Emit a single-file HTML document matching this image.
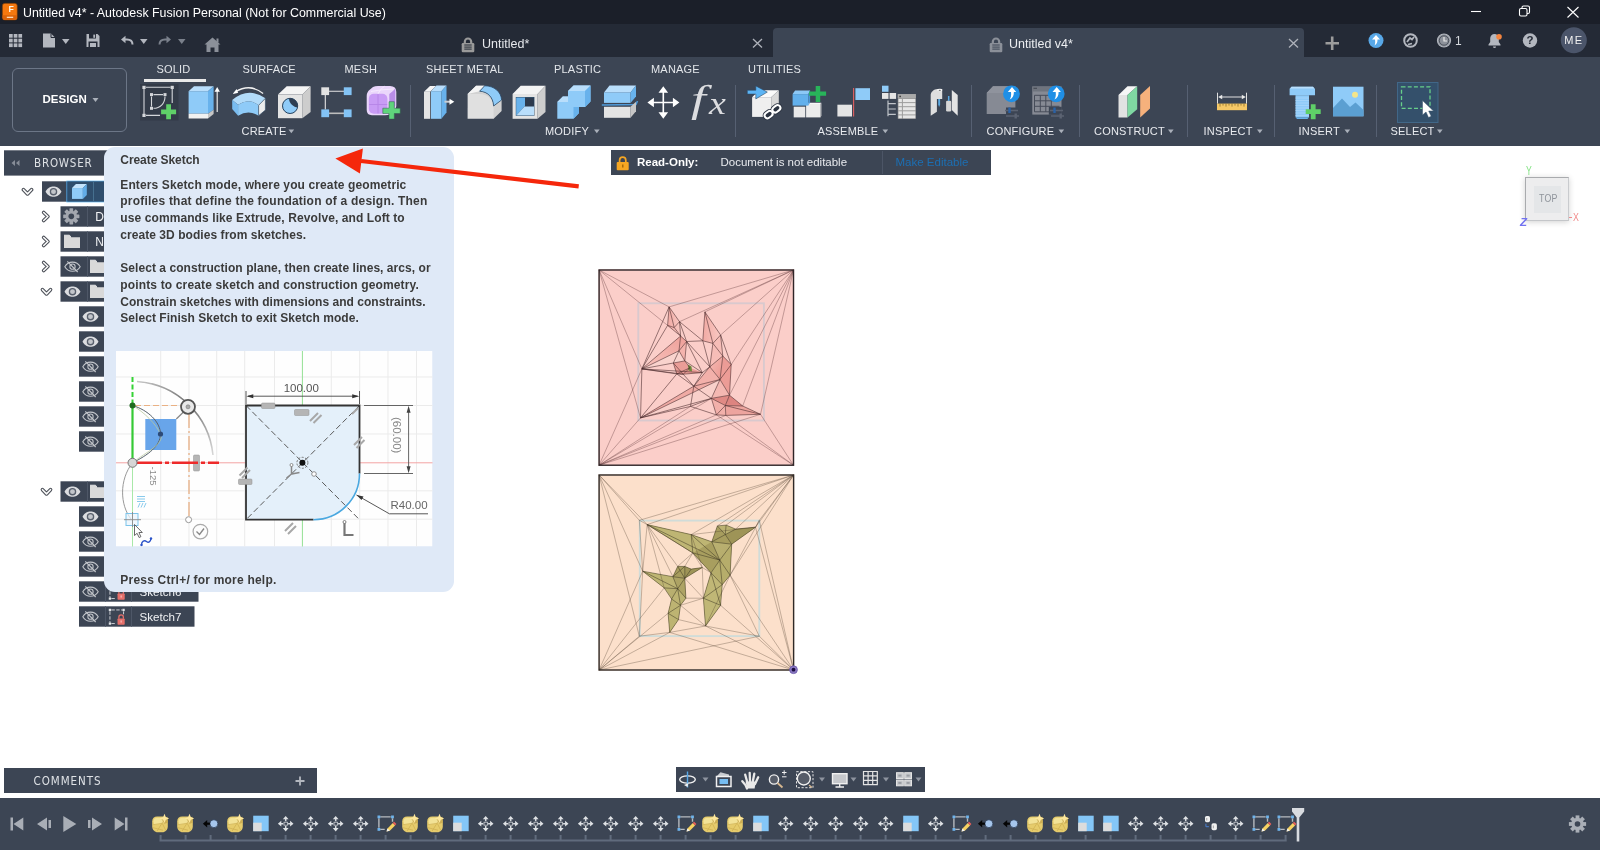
<!DOCTYPE html>
<html><head><meta charset="utf-8"><title>Untitled v4* - Autodesk Fusion Personal</title>
<style>
*{box-sizing:border-box;margin:0;padding:0}
html,body{width:1600px;height:850px;overflow:hidden;background:#fff;font-family:"Liberation Sans",sans-serif;}
.abs{position:absolute}
#titlebar{position:absolute;left:0;top:0;width:1600px;height:24px;background:#1b1f29;color:#fff}
#tabbar{position:absolute;left:0;top:24px;width:1600px;height:33px;background:#242a36}
#ribbon{position:absolute;left:0;top:57px;width:1600px;height:88.700px;background:#3c4554}
#timeline{position:absolute;left:0;top:798px;width:1600px;height:52px;background:#3c4554}
.t{position:absolute;white-space:nowrap;line-height:1}
.rl{position:absolute;white-space:nowrap;line-height:1;color:#e8eaee;font-size:11px;letter-spacing:0.2px;top:126.200px}
.tab{position:absolute;white-space:nowrap;line-height:1;color:#e3e6ea;font-size:11px;letter-spacing:0.2px;top:63.900px}
.sep{position:absolute;top:85px;width:1px;height:52px;background:#566072}
.tt{font-size:12px;font-weight:bold;color:#3b3b3b}
svg{position:absolute;overflow:visible}
#root{position:absolute;left:0;top:0;width:1600px;height:850px;will-change:transform}
</style></head><body>
<div id="root">
<!-- ===== TITLE BAR ===== -->
<div id="titlebar">
  <svg style="left:2.100px;top:2.800px" width="15.600" height="17.400" viewBox="0 0 15.600 17.400">
    <rect x="0.300" y="0.300" width="15" height="16.800" rx="2.600" fill="#f5780f" stroke="#6a3205" stroke-width="0.600"/>
    <path d="M0.600 12.200h14.400v2.600a2.300 2.300 0 0 1-2.300 2.300h-9.800a2.300 2.300 0 0 1-2.300-2.300z" fill="#d9620a"/>
    <rect x="4.800" y="13.700" width="6.400" height="1.300" fill="#fbd9b8"/>
  </svg>
  <div class="t" style="left:8.500px;top:4.900px;font-size:8.700px;font-weight:bold;color:#fff5e6">F</div>
  <div class="t" id="ttl" style="left:23px;top:7.100px;font-size:12.4px;color:#fff;letter-spacing:0.01px">Untitled v4* - Autodesk Fusion Personal (Not for Commercial Use)</div>
  <svg style="left:1465px;top:0" width="130" height="24" viewBox="0 0 130 24" fill="none" stroke="#fff" stroke-width="1.1">
    <path d="M6 11.5h10"/>
    <rect x="54.5" y="8.5" width="7.5" height="7.5" rx="1.5"/>
    <path d="M57 8.5v-1a1.5 1.5 0 0 1 1.5-1.5h4.5a1.5 1.5 0 0 1 1.5 1.5v4.500a1.5 1.5 0 0 1-1.5 1.500h-1"/>
    <path d="M102.500 7l11 10.500M113.500 7l-11 10.500"/>
  </svg>
</div>
<!-- ===== TAB BAR ===== -->
<div id="tabbar">
  <!-- quick access icons -->
  <svg style="left:0;top:0" width="240" height="33" viewBox="0 24 240 33">
    <g fill="#b3b7bf">
      <rect x="9" y="34" width="3.700" height="3.700"/><rect x="13.700" y="34" width="3.700" height="3.700"/><rect x="18.400" y="34" width="3.700" height="3.700"/>
      <rect x="9" y="38.700" width="3.700" height="3.700"/><rect x="13.700" y="38.700" width="3.700" height="3.700"/><rect x="18.400" y="38.700" width="3.700" height="3.700"/>
      <rect x="9" y="43.400" width="3.700" height="3.700"/><rect x="13.700" y="43.400" width="3.700" height="3.700"/><rect x="18.400" y="43.400" width="3.700" height="3.700"/>
      <path d="M43 33.500h8l4 4v10h-12z"/>
      <path d="M62 39h7.500l-3.750 5z"/>
      <path d="M86.500 34h11l2 2v11h-13z"/>
      <path d="M140 39h7.500l-3.750 5z"/>
    </g>
    <path d="M51 33.500v4h4" fill="none" stroke="#242a36" stroke-width="1"/>
    <rect x="89" y="34" width="7" height="4.500" fill="#242a36"/><rect x="93.300" y="34.600" width="1.800" height="3.200" fill="#b3b7bf"/>
    <rect x="88.500" y="41.500" width="9" height="5.500" fill="#242a36"/><rect x="90" y="43" width="6" height="4" fill="#b3b7bf"/>
    <path d="M132.500 44.500c0-3.500-2.500-5-5.500-5h-3" fill="none" stroke="#b3b7bf" stroke-width="2"/>
    <path d="M121 39.500l4.500-3.800v7.600z" fill="#b3b7bf"/>
    <path d="M159.500 44.500c0-3.500 2.500-5 5.500-5h3" fill="none" stroke="#7a808b" stroke-width="2"/>
    <path d="M171 39.500l-4.500-3.800v7.600z" fill="#7a808b"/>
    <path d="M178 39h7.500l-3.750 5z" fill="#7a808b"/>
    <path d="M212.500 37.500l8 7h-2v7.500h-4v-4.500h-4v4.500h-4v-7.500h-2z" fill="#8b9099"/>
    <rect x="216.500" y="38.500" width="2" height="4" fill="#8b9099"/>
  </svg>
  <!-- tab 1 -->
  <svg class="lock" style="left:461.300px;top:12.500px" width="14" height="16" viewBox="0 0 14 16">
    <path d="M3.800 6.700V4.700a3.200 3.200 0 0 1 6.400 0V6.700" fill="none" stroke="#9a9a9a" stroke-width="2.200"/>
    <rect x="0.700" y="6" width="12.600" height="9.300" rx="1.200" fill="#9a9a9a"/>
    <path d="M3.300 8h7.400M3.300 10.100h7.400M3.300 12.100h7.400" stroke="#242a36" stroke-width="1"/>
  </svg>
  <div class="t" style="left:482px;top:13.900px;font-size:12.500px;color:#e6e8ec">Untitled*</div>
  <svg style="left:752px;top:14px" width="11" height="11" viewBox="0 0 11 11"><path d="M1 1l9 8.500M10 1l-9 8.500" stroke="#aeb2ba" stroke-width="1.300" fill="none"/></svg>
  <!-- tab 2 (active) -->
  <div class="abs" style="left:773px;top:4px;width:531px;height:29px;background:#3c4554;border-radius:4px 4px 0 0"></div>
  <svg class="lock" style="left:988.800px;top:12.500px" width="14" height="16" viewBox="0 0 14 16">
    <path d="M3.800 6.700V4.700a3.200 3.200 0 0 1 6.400 0V6.700" fill="none" stroke="#8b9099" stroke-width="2.200"/>
    <rect x="0.700" y="6" width="12.600" height="9.300" rx="1.200" fill="#8b9099"/>
    <path d="M3.300 8h7.400M3.300 10.100h7.400M3.300 12.100h7.400" stroke="#3c4554" stroke-width="1"/>
  </svg>
  <div class="t" style="left:1009px;top:13.900px;font-size:12.500px;color:#eceef1">Untitled v4*</div>
  <svg style="left:1287.500px;top:14px" width="11" height="11" viewBox="0 0 11 11"><path d="M1 1l9 8.500M10 1l-9 8.500" stroke="#aeb2ba" stroke-width="1.300" fill="none"/></svg>
  <!-- right icons -->
  <svg style="left:1320px;top:0" width="280" height="33" viewBox="1320 24 280 33">
    <path d="M1325.500 43.300h13.500M1332.200 36.500v13.500" stroke="#9c9c9c" stroke-width="2.600" fill="none"/>
    <circle cx="1376" cy="40.500" r="7.500" fill="#58a8e8"/>
    <path d="M1376 35l4 4.500h-2.500c0 3-0.500 4.500-3 6 0.800-1.500 0.800-3.500 0.500-6h-3z" fill="#fff"/>
    <circle cx="1410.500" cy="40.500" r="6.300" fill="none" stroke="#b3b7bf" stroke-width="2"/>
    <path d="M1407 42l3-4 2 1.500 2-2.500M1408 44.500l4-1" stroke="#b3b7bf" stroke-width="1.800" fill="none"/>
    <circle cx="1444" cy="40.500" r="6.500" fill="#8d929b" stroke="#b3b7bf" stroke-width="1.200"/>
    <circle cx="1444" cy="40.500" r="4.700" fill="#8d929b" stroke="#242a36" stroke-width="0.600"/>
    <path d="M1444 37v4h3" stroke="#e8e8e8" stroke-width="1.200" fill="none"/>
    <path d="M1494.500 34a4.300 4.300 0 0 1 4.300 4.300v3.700l1.700 2.500v1h-12v-1l1.700-2.500v-3.700a4.300 4.300 0 0 1 4.300-4.300z" fill="#b3b7bf"/>
    <path d="M1493 46.500h3a1.500 1.500 0 0 1-3 0z" fill="#b3b7bf"/>
    <circle cx="1499" cy="36.800" r="2.800" fill="#f5853f"/>
    <circle cx="1530" cy="40.500" r="7.200" fill="#b3b7bf"/>
    <circle cx="1573.800" cy="40.300" r="13" fill="#4b556a"/>
  </svg>
  <div class="t" style="left:1455px;top:11px;font-size:12px;color:#d6d9de">1</div>
  <div class="t" style="left:1526.400px;top:11px;font-size:11.500px;font-weight:bold;color:#242a36">?</div>
  <div class="t" style="left:1564.300px;top:10.800px;font-size:11px;color:#f0f0f0;letter-spacing:1.200px">ME</div>
</div>

<!-- ===== RIBBON ===== -->
<div id="ribbon"></div>
<div class="abs" style="left:12px;top:68px;width:115px;height:64px;border:1px solid #6c7687;border-radius:6px"></div>
<div class="t" style="left:42.500px;top:93.600px;font-size:11.500px;font-weight:bold;color:#fff;letter-spacing:0.05px">DESIGN</div>
<div class="tab" style="left:156.500px">SOLID</div>
<div class="abs" style="left:144px;top:79px;width:62px;height:3px;background:#e9e9e9"></div>
<div class="tab" style="left:242.500px">SURFACE</div>
<div class="tab" style="left:344.500px">MESH</div>
<div class="tab" style="left:426px">SHEET METAL</div>
<div class="tab" style="left:554px">PLASTIC</div>
<div class="tab" style="left:651px">MANAGE</div>
<div class="tab" style="left:748px">UTILITIES</div>
<div class="rl" style="left:241.500px">CREATE</div>
<div class="rl" style="left:545px">MODIFY</div>
<div class="rl" style="left:817.500px">ASSEMBLE</div>
<div class="rl" style="left:986.500px">CONFIGURE</div>
<div class="rl" style="left:1094px">CONSTRUCT</div>
<div class="rl" style="left:1203.500px">INSPECT</div>
<div class="rl" style="left:1298.500px">INSERT</div>
<div class="rl" style="left:1390.500px">SELECT</div>
<div class="sep" style="left:410px"></div>
<div class="sep" style="left:735px"></div>
<div class="sep" style="left:971px"></div>
<div class="sep" style="left:1079px"></div>
<div class="sep" style="left:1187px"></div>
<div class="sep" style="left:1274px"></div>
<div class="sep" style="left:1376px"></div>
<svg style="left:0;top:57px" width="1600" height="88" viewBox="0 57 1600 88">
  <!-- dropdown arrows -->
  <g fill="#aab0ba">
    <path d="M92.500 98h6l-3 4z"/>
    <path d="M288.500 129.500h5.600l-2.800 3.800z"/><path d="M594 129.500h5.600l-2.800 3.800z"/><path d="M882.500 129.500h5.600l-2.800 3.800z"/>
    <path d="M1058.500 129.500h5.600l-2.800 3.800z"/><path d="M1168 129.500h5.600l-2.800 3.800z"/><path d="M1257 129.500h5.600l-2.800 3.800z"/>
    <path d="M1344.500 129.500h5.600l-2.800 3.800z"/><path d="M1437 129.500h5.600l-2.800 3.800z"/>
  </g>
  <!-- 1 create sketch -->
  <rect x="140" y="84" width="38.500" height="36.500" fill="#333b48"/>
  <g stroke="#d4d6da" stroke-width="1.100" fill="none">
    <path d="M144 89v25M146 87.300h24.500M172.200 89v14M146 115.400h14"/>
    <path d="M151.500 96.500v10M153.500 94.600h9.500M165 96.500c0 7-5 11.800-11.500 11.800"/>
  </g>
  <g fill="#d4d6da">
    <rect x="142.400" y="85.800" width="3.200" height="3.200"/><rect x="170.600" y="85.800" width="3.200" height="3.200"/><rect x="142.400" y="113.800" width="3.200" height="3.200"/>
    <rect x="150" y="93.100" width="3" height="3"/><rect x="163.500" y="93.100" width="3" height="3"/><rect x="150" y="106.800" width="3" height="3"/>
  </g>
  <path d="M166.200 104.300h4.800v5.100h5.100v4.800h-5.100v5.100h-4.800v-5.100h-5.100v-4.800h5.100z" fill="#5fd068"/>
  <!-- 2 extrude -->
  <path d="M188.600 91.200L194 86.200h19.600L208 91.200z" fill="#b9defb"/>
  <rect x="188.600" y="91.200" width="19.400" height="22.500" fill="#8fcbf8"/>
  <path d="M208 91.200l5.600-5v23.600l-5.600 3.900z" fill="#68b2ec"/>
  <rect x="188.600" y="113.700" width="19.400" height="4.800" fill="#f1f1f1"/>
  <path d="M208 113.700l5.600-3.900v4.200l-5.600 4.500z" fill="#c6c6c6"/>
  <path d="M217.200 112V91" stroke="#e8e8e8" stroke-width="1.200"/><path d="M217.200 87l2.700 4.800h-5.400z" fill="#fff"/>
  <!-- 3 revolve -->
  <path d="M263.100 93.500Q250 83 235.500 91.800" stroke="#f2f2f2" stroke-width="1.300" fill="none"/><path d="M232.600 94l4-5 1.600 3.800z" fill="#fff"/>
  <path d="M232.200 100Q248.500 86.500 265.400 98.300L258.600 105.300Q248.500 97.500 238.100 104.800z" fill="#b2dbf9"/>
  <path d="M232.200 100l5.900 4.800v10.900l-5.900-6.700z" fill="#79bcf0"/>
  <path d="M238.100 104.800Q248.500 97.500 258.600 105.300V115.700Q248.500 109.500 238.100 115.700z" fill="#8fcbf8"/>
  <path d="M258.600 105.300l6.800-7v11.800l-6.800 5.600z" fill="#ececec" stroke="#2f4a66" stroke-width="0.600"/>
  <!-- 4 hole -->
  <path d="M278 94.600l8.700-8.400h23.900l-8.300 8.400z" fill="#f4f4f4"/>
  <rect x="278" y="94.600" width="24.300" height="23.600" fill="#e4e4e4"/>
  <path d="M302.300 94.600l8.300-8.400v25.800l-8.300 6.200z" fill="#cdcdcd"/>
  <circle cx="290.100" cy="105.900" r="7.600" fill="#8fcbf8" stroke="#24415e" stroke-width="1"/>
  <path d="M289 98.400a7.600 7.600 0 0 1 8.600 8.800c-3.800 0-8.600-3.800-8.600-8.800z" fill="#2d3d52"/>
  <!-- 5 pattern -->
  <path d="M329 91.200h15M325.300 95v14.500" stroke="#e4e4e4" stroke-width="1.100"/><path d="M329 113.300h15" stroke="#bdbdbd" stroke-width="1.600"/>
  <rect x="321.300" y="87.300" width="7.800" height="7.800" fill="#e2e2e2"/>
  <rect x="343.800" y="87.300" width="7.800" height="7.800" fill="#83c3f5"/>
  <rect x="321.300" y="109.400" width="7.800" height="7.800" fill="#83c3f5"/>
  <rect x="343.800" y="109.400" width="7.800" height="7.800" fill="#83c3f5"/>
  <!-- 6 form -->
  <path d="M366.700 96Q366.700 92 370 89.500L373 87Q375 85.900 378 85.900H390Q396.300 85.900 396.300 92V106Q396.300 109 394 111L390 114Q388 115.200 385 115.200H372Q366.700 115.200 366.700 110z" fill="#ead6fb"/>
  <rect x="368.800" y="93.800" width="18.600" height="20" rx="5" fill="#c99cf5"/>
  <path d="M389.300 94Q393 91.500 395.300 88.500V106Q393.500 109 389.300 111.500z" fill="#b98de8"/>
  <path d="M378 94.200v19.200M369.200 104.500h18" stroke="#b685e6" stroke-width="0.900" fill="none"/><path d="M378 93.800Q380 89 384.500 86.300M371 91.500Q380 89.500 393.500 89" stroke="#f6ecfe" stroke-width="0.900" fill="none"/>
  <path d="M389 101.700h5.300v6.500h5.900v5.300h-5.900v5.600h-5.300v-5.600h-6.200v-5.300h6.200z" fill="#5fd47c" stroke="#2f5a4a" stroke-width="0.500"/>
  <!-- 7 press pull -->
  <path d="M424 91.800l6-5.800h6l-5.800 5.800z" fill="#f4f4f4"/><rect x="424" y="91.800" width="6.200" height="27" fill="#e4e4e4"/>
  <path d="M431 91.200l5.500-5.700h10l-5.100 5.700z" fill="#b9defb"/><rect x="431" y="91.200" width="10.400" height="27.600" fill="#8fcbf8"/>
  <path d="M441.400 91.200l5.100-5.700v27.100l-5.100 6.200z" fill="#68b2ec"/>
  <path d="M444.500 101.700h6" stroke="#c8ccd2" stroke-width="2"/><path d="M449.500 98.700l4.800 3-4.800 3z" fill="#fff"/>
  <!-- 8 fillet -->
  <path d="M467.600 94l8.500-8.200h8l-4.500 5.400c8 .5 13.500 5.500 14 14.800l8-6.500v11.500l-8 7.800z" fill="#d2d2d2"/>
  <path d="M467.600 94l8.500-8.200h8.500l-5 5.400z" fill="#f4f4f4"/>
  <path d="M467.600 94h12c8 0 14 5.500 14 14v10.800h-26z" fill="#e0e0e0"/>
  <path d="M479.600 91.200l5-5.400c9.500 0 16.500 6 17 14.200l-8 6c-.5-9-6-14.300-14-14.800z" fill="#8fcbf8" stroke="#24415e" stroke-width="0.700"/>
  <!-- 9 shell -->
  <path d="M512.600 94l8.100-8.200h24.800l-7.900 8.200z" fill="#f4f4f4"/><rect x="512.600" y="94" width="25" height="24.800" fill="#e4e4e4"/>
  <path d="M537.600 94l7.900-8.200v26.200l-7.900 6.800z" fill="#cdcdcd"/>
  <rect x="516.200" y="97.400" width="17.800" height="18" fill="#2d3a4d" stroke="#24415e" stroke-width="0.800"/>
  <path d="M516.200 97.400h8.800v9h-0.500l-8.300 9z" fill="#68b2ec"/><path d="M516.200 115.400l8.300-9h9.500v9z" fill="#b9defb"/>
  <!-- 10 combine -->
  <path d="M568 91l5.500-5.500h17v16l-5.500 5.500h-6v6l-5.500 5.800h-16.200v-16.800l5.500-5.500h5.200z" fill="#8fcbf8"/>
  <path d="M568 91l5.500-5.500h17l-5.500 5.500zM557.300 102l5.500-5.500h5.200v5.500z" fill="#b9defb"/>
  <path d="M585 91l5.500-5.500v16l-5.500 5.500zM573.500 107h5.500v6l-5.500 5.800z" fill="#68b2ec"/>
  <!-- 11 split body -->
  <path d="M604 92.400l5.500-6.900h26.500l-5.500 6.900z" fill="#b9defb"/><rect x="604" y="92.400" width="26.500" height="10.500" fill="#8fcbf8"/>
  <path d="M630.500 92.400l5.500-6.900v11l-5.500 6.400z" fill="#68b2ec"/>
  <path d="M601.800 105l34.200-0.500 1.500-3.500" stroke="#4f9ad8" stroke-width="1.600" fill="none"/>
  <rect x="604" y="106.800" width="26.500" height="11" fill="#e4e4e4"/><path d="M630.500 106.800l5.500-5v9.500l-5.500 6.500z" fill="#c6c6c6"/>
  <!-- 12 move -->
  <path d="M663.300 90v25M650 102.500h26.500" stroke="#fff" stroke-width="1.600"/>
  <path d="M663.300 86.200l4.800 6.500h-9.600zM663.300 118.800l4.800-6.500h-9.600zM647.400 102.500l6.500-4.800v9.600zM679.400 102.500l-6.500-4.800v9.600z" fill="#fff"/>
  <!-- 14 insert derive -->
  <path d="M752.100 97.200l7-7h19.700l-7.600 7z" fill="#fafafa"/><rect x="752.100" y="97.200" width="19.100" height="19.700" fill="#efefef"/><path d="M771.200 97.200l7.600-7v19.700l-7.600 7z" fill="#d9d9d9"/>
  <path d="M747.300 90.200h8.500v-4.300l11.500 6.200-11.500 6.800v-4.800h-8.500z" fill="#5cb4f4" stroke="#2c4a68" stroke-width="0.600"/>
  <g fill="#2a3240" stroke="#2a3240" stroke-width="3.800"><rect x="764.300" y="111.800" width="8.600" height="5.600" rx="2.800" transform="rotate(-37 768.600 114.600)"/><rect x="772.100" y="106" width="8.600" height="5.600" rx="2.800" transform="rotate(-37 776.400 108.800)"/></g>
  <g fill="#2a3240" stroke="#fff" stroke-width="2"><rect x="764.300" y="111.800" width="8.600" height="5.600" rx="2.800" transform="rotate(-37 768.600 114.600)"/><rect x="772.100" y="106" width="8.600" height="5.600" rx="2.800" transform="rotate(-37 776.400 108.800)"/></g>
  <!-- 15 new component -->
  <rect x="793.700" y="106.700" width="11.600" height="10.700" fill="#e9e9e9"/><rect x="806.100" y="104" width="14.400" height="13.400" fill="#ececec"/>
  <path d="M806.100 104l1.200-1.300h14l-0.800 1.300z" fill="#f8f8f8"/><path d="M820.500 104l0.900-1.300v13l-0.900 1.700z" fill="#d2d2d2"/>
  <path d="M792.600 94.100l2.500-3.700h15l-1.700 3.700z" fill="#8cc8f6"/><rect x="792.600" y="94.100" width="15.800" height="11.500" fill="#62b0ec"/><path d="M808.400 94.100l1.700-3.700v12l-1.700 3.200z" fill="#4a96d6"/>
  <path d="M815.700 85.900h4.500v5.700h5.900v4.200h-5.900v6.200h-4.500v-6.200h-6.500v-4.200h6.500z" fill="#28b45a"/>
  <!-- 16 joint -->
  <rect x="837.400" y="104.700" width="14.600" height="11.800" fill="#e4e4e4"/><path d="M853.600 88v28.500" stroke="#e26060" stroke-width="1.100"/><rect x="855.400" y="88.200" width="14.600" height="11.800" fill="#8fcbf8"/>
  <!-- 17 table -->
  <rect x="882" y="85.700" width="6.500" height="6.100" fill="#8fcbf8"/><rect x="882" y="93" width="6.500" height="5.900" fill="#e6e6e6"/><rect x="889.600" y="93" width="6.500" height="5.900" fill="#e6e6e6"/>
  <path d="M888 100.600v15.700M888 103.700h7.800M888 109h7.800M888 114.300h7.800" stroke="#bfc3c9" stroke-width="1.200" fill="none"/>
  <rect x="897.800" y="94.100" width="18" height="24.700" fill="#9c9c9c"/><rect x="897.800" y="94.100" width="18" height="3.900" fill="#a9a9a9"/><rect x="899.300" y="95.700" width="1.700" height="1.500" fill="#444"/>
  <g fill="#e6e6e6"><rect x="898.500" y="99" width="3.400" height="3.100"/><rect x="902.900" y="99" width="12.400" height="3.100"/><rect x="898.500" y="103.100" width="3.400" height="3.100"/><rect x="902.900" y="103.100" width="12.400" height="3.100"/><rect x="898.500" y="107.200" width="3.400" height="3.100"/><rect x="902.900" y="107.200" width="12.400" height="3.100"/><rect x="898.500" y="111.300" width="3.400" height="3.100"/><rect x="902.900" y="111.300" width="12.400" height="3.100"/><rect x="898.500" y="115.400" width="3.400" height="2.900"/><rect x="902.900" y="115.400" width="12.400" height="2.900"/></g>
  <!-- 18 panels -->
  <path d="M930.700 115.700V95c0-3 3.500-6 6.700-6h4.800v9.900h-5.300v12.900z" fill="#dedede"/><ellipse cx="939.800" cy="90" rx="2.600" ry="1.200" fill="#f6f6f6"/><ellipse cx="939.800" cy="90.200" rx="1.100" ry="0.500" fill="#555"/>
  <path d="M938.200 98.900h1.900v5.500l-0.950 2.500l-0.950-2.500z" fill="#5aa8e0"/>
  <path d="M951.800 89.900l5.900 5v20.800l-5.900-5.600z" fill="#e4e4e4"/>
  <rect x="946.100" y="100.800" width="5.100" height="10.700" rx="1.200" fill="#d6d6d6"/><path d="M948.700 96v5" stroke="#5aa8e0" stroke-width="1.500"/>
  <!-- 19 configure -->
  <path d="M986.700 93l6.300-6.800h22.400v21.300h-9.400v6.500h-19.300z" fill="#868a94"/><path d="M986.700 93l6.300-6.800h22.400l-6 6.800z" fill="#8f939d"/>
  <path d="M1005 110.500h13M1006 116h13" stroke="#5b6372" stroke-width="1.300"/><rect x="1008.300" y="107.500" width="2.400" height="5.500" fill="#2a62a6"/><rect x="1014.500" y="113.500" width="2.400" height="5" fill="#5b6372"/>
  <circle cx="1011.500" cy="93.800" r="8.400" fill="#1f8fe6"/><path d="M1012 87l4.200 5h-2.300c0 3.500-1 6-4.200 7.500 1.300-2 1.700-4.500 1.300-7.500h-3.200z" fill="#fff"/>
  <!-- 20 config table -->
  <rect x="1032.300" y="86.500" width="29.200" height="28.100" fill="#868a94"/><rect x="1032.300" y="86.500" width="29.200" height="5" fill="#6f747e"/><rect x="1033.500" y="87.700" width="3.500" height="1.300" fill="#4a4f59"/>
  <path d="M1034.500 95.300h25M1034.500 100.800h25M1034.500 106.300h25M1034.500 111.800h25M1034.500 95.300v16.500M1040.300 95.300v16.500M1045.800 95.300v16.500M1051.300 95.300v16.500" stroke="#464c59" stroke-width="1" fill="none"/>
  <rect x="1048.800" y="106.800" width="13" height="8" fill="#3c4554"/><path d="M1050 110.500h13M1051 116h13" stroke="#5b6372" stroke-width="1.300"/><rect x="1053.300" y="107.500" width="2.400" height="5.500" fill="#2a62a6"/><rect x="1059.500" y="113.500" width="2.400" height="5" fill="#5b6372"/>
  <circle cx="1056.200" cy="93.800" r="8.400" fill="#1f8fe6"/><path d="M1056.700 87l4.200 5h-2.300c0 3.500-1 6-4.200 7.500 1.300-2 1.700-4.500 1.300-7.500h-3.200z" fill="#fff"/>
  <!-- 21 construct -->
  <path d="M1118.500 95l9-8.700h9.700l-9.700 8.700z" fill="#f6f6f6"/><rect x="1118.500" y="95" width="9" height="22.500" fill="#e2e2e2"/>
  <path d="M1127.500 95l9.700-8.700v22.900l-9.700 8.300z" fill="#7fd8a2"/>
  <path d="M1140.200 95l9.800-9v22.500l-9.800 9z" fill="#f6b17c"/>
  <!-- 22 inspect -->
  <path d="M1217.500 92.700v11M1246.500 92.700v11M1220 97h24" stroke="#e0e0e0" stroke-width="1"/><path d="M1218.200 97l4-2.200v4.400zM1245.800 97l-4-2.200v4.400z" fill="#e8e8e8"/>
  <rect x="1217" y="103.600" width="30" height="6.600" fill="#f6c866"/><path d="M1220 103.600v3M1223 103.600v2M1226 103.600v3M1229 103.600v2M1232 103.600v3M1235 103.600v2M1238 103.600v3M1241 103.600v2M1244 103.600v3" stroke="#8a6d2a" stroke-width="0.800"/>
  <!-- 23 insert fastener -->
  <path d="M1291.500 86.700h21.500l2 2v6.500h-25.400v-6.500z" fill="#8fcbf8"/><path d="M1291.500 86.700h21.500l1.200 1.800h-24z" fill="#b9defb"/>
  <rect x="1295.500" y="95.200" width="13.500" height="22" fill="#8fcbf8"/><path d="M1295.500 117.200h13.500l-1.500 1.800h-10.500z" fill="#68b2ec"/>
  <path d="M1295.500 98h13.500M1295.500 100.500h13.500M1295.500 103h13.500M1295.500 105.500h13.500M1295.500 108h13.500M1295.500 110.500h13.500M1295.500 113h13.500M1295.500 115.500h13.500" stroke="#a9d6fa" stroke-width="0.800"/>
  <path d="M1310.800 104.200h4.800v5.100h5.100v4.800h-5.100v5.100h-4.800v-5.100h-5.100v-4.800h5.100z" fill="#5fd068"/>
  <!-- 24 insert image -->
  <rect x="1333" y="86.700" width="30.500" height="29.600" fill="#8fcbf8"/>
  <path d="M1333 108l9-9.500 8 8.500 5.500-4.500 8 7.500v6.300h-30.500z" fill="#5b9fd2"/><circle cx="1355" cy="94.800" r="3" fill="#f4e58a"/>
  <!-- 25 select -->
  <rect x="1397.500" y="82.500" width="40.500" height="40" fill="#34506b" stroke="#416788" stroke-width="1"/>
  <rect x="1401.500" y="86.800" width="28.500" height="21.500" fill="none" stroke="#67cf8a" stroke-width="1.300" stroke-dasharray="4 2.200"/>
  <path d="M1422.500 100.500v14.500l3.500-3 2.500 5.500 2.700-1.200-2.500-5.300h4.800z" fill="#fff" stroke="#34506b" stroke-width="0.500"/>
</svg>
<div class="t" id="fxf" style="left:691px;top:81.800px;font-size:36.900px;font-style:italic;font-family:'Liberation Serif',serif;color:#dcdde0;transform:scaleX(1.45);transform-origin:0 0">f</div>
<div class="t" id="fxx" style="left:708.600px;top:88px;font-size:31.600px;font-style:italic;font-family:'Liberation Serif',serif;color:#dcdde0;transform:scaleX(1.2);transform-origin:0 0">x</div>

<!-- ===== CANVAS ===== -->
<svg style="left:0;top:0" width="1600" height="850" viewBox="0 0 1600 850">
<defs><linearGradient id="fg1" x1="0" y1="1" x2="1" y2="0"><stop offset="0" stop-color="#f8c4bd"/><stop offset="1" stop-color="#ee9f99"/></linearGradient><linearGradient id="fg2" x1="0" y1="0" x2="1" y2="0"><stop offset="0" stop-color="#f1aaa4"/><stop offset="1" stop-color="#f9c9c3"/></linearGradient><linearGradient id="fg3" x1="0" y1="0" x2="1" y2="1"><stop offset="0" stop-color="#f6bcb5"/><stop offset="1" stop-color="#ea958f"/></linearGradient><linearGradient id="bg1" x1="0" y1="0" x2="1" y2="1"><stop offset="0" stop-color="#c9c07f"/><stop offset="1" stop-color="#a49a5c"/></linearGradient></defs>
<rect x="598.4" y="269.3" width="195.8" height="196.6" fill="#fbcec9"/>
<rect x="638.3" y="303.3" width="125.6" height="117.2" fill="none" stroke="#d9c9ce" stroke-width="1.9"/>
<polygon points="669.1,306.9 679.5,321.7 680.6,336.0 667.6,325.4" fill="url(#fg2)"/>
<polygon points="641.9,368.9 680.6,336.0 686.6,341.5 679.0,350.8" fill="url(#fg1)"/>
<polygon points="641.9,368.9 679.0,350.8 684.8,360.9 673.3,363.0" fill="#f9d3cd"/>
<polygon points="679.0,350.8 686.6,341.5 684.8,360.9" fill="#f4b3ad"/>
<polygon points="673.3,363.0 684.8,360.9 689.9,367.8 702.3,372.6 683.2,374.2 676.8,373.9" fill="#ea9d97"/>
<polygon points="704.9,311.9 720.6,335.0 712.9,343.4 702.8,340.8" fill="url(#fg2)"/>
<polygon points="712.9,343.4 720.6,335.0 722.8,356.0 709.8,366.8" fill="#f6bdb7"/>
<polygon points="709.8,366.8 722.8,356.0 720.0,379.5" fill="url(#fg3)"/>
<polygon points="722.8,356.0 731.2,364.6 729.5,395.2 720.0,379.5" fill="#ec9c96"/>
<polygon points="693.8,386.2 709.8,366.8 720.0,379.5" fill="#f2b0aa"/>
<polygon points="640.5,417.9 693.8,386.2 720.0,379.5" fill="#efaaa4"/>
<polygon points="640.5,417.9 720.0,379.5 711.4,398.4" fill="#f9d0ca"/>
<polygon points="720.0,379.5 729.5,395.2 711.4,398.4" fill="#f4b8b2"/>
<polygon points="711.4,398.4 729.5,395.2 725.3,405.5" fill="#e08a85"/>
<polygon points="729.5,395.2 742.7,406.0 725.3,405.5" fill="#dd8480"/>
<polygon points="725.3,405.5 742.7,406.0 760.5,414.3 725.8,415.4" fill="#eda49e"/>
<polygon points="711.4,398.4 725.3,405.5 725.8,415.4 716.4,414.9" fill="#f2b0aa"/>
<polygon points="688.0,364.5 691.5,366.5 692.0,371.5 688.5,370.5" fill="#6e8a3e"/>
<path d="M669.1 306.9L679.5 321.7M669.1 306.9L667.6 325.4M669.1 306.9L674.2 327.5M667.6 325.4L674.2 327.5M674.2 327.5L679.5 321.7M679.5 321.7L680.6 336.0M667.6 325.4L680.6 336.0M674.2 327.5L680.6 336.0M680.6 336.0L686.6 341.5M680.6 336.0L679.0 350.8M686.6 341.5L679.0 350.8M686.6 341.5L684.8 360.9M679.0 350.8L641.9 368.9M680.6 336.0L641.9 368.9M667.6 325.4L641.9 368.9M669.1 306.9L641.9 368.9M679.0 350.8L673.3 363.0M679.0 350.8L684.8 360.9M641.9 368.9L673.3 363.0M673.3 363.0L684.8 360.9M673.3 363.0L676.8 373.9M676.8 373.9L683.2 374.2M683.2 374.2L702.3 372.6M684.8 360.9L702.3 372.6M684.8 360.9L689.9 367.8M689.9 367.8L683.2 374.2M689.9 367.8L676.8 373.9M673.3 363.0L683.2 374.2M641.9 368.9L676.8 373.9M641.9 368.9L702.3 372.6M641.9 368.9L683.2 374.2M704.9 311.9L720.6 335.0M704.9 311.9L702.8 340.8M704.9 311.9L712.9 343.4M702.8 340.8L712.9 343.4M720.6 335.0L712.9 343.4M720.6 335.0L722.8 356.0M712.9 343.4L722.8 356.0M712.9 343.4L709.8 366.8M722.8 356.0L731.2 364.6M722.8 356.0L709.8 366.8M731.2 364.6L720.0 379.5M709.8 366.8L720.0 379.5M722.8 356.0L720.0 379.5M731.2 364.6L729.5 395.2M720.0 379.5L729.5 395.2M709.8 366.8L693.8 386.2M693.8 386.2L640.5 417.9M720.0 379.5L640.5 417.9M720.0 379.5L693.8 386.2M640.5 417.9L711.4 398.4M720.0 379.5L711.4 398.4M729.5 395.2L711.4 398.4M711.4 398.4L716.4 414.9M716.4 414.9L725.8 415.4M725.8 415.4L725.3 405.5M729.5 395.2L725.3 405.5M711.4 398.4L725.3 405.5M725.3 405.5L760.5 414.3M725.8 415.4L760.5 414.3M729.5 395.2L742.7 406.0M742.7 406.0L760.5 414.3M725.3 405.5L742.7 406.0M640.5 417.9L690.5 406.4M690.5 406.4L711.4 398.4M690.5 406.4L716.4 414.9M686.6 341.5L702.8 340.8M686.6 341.5L702.3 372.6M686.6 341.5L709.8 366.8M679.5 321.7L702.8 340.8M679.5 321.7L686.6 341.5M702.8 340.8L709.8 366.8M702.3 372.6L709.8 366.8M702.3 372.6L693.8 386.2M683.2 374.2L693.8 386.2M676.8 373.9L640.5 417.9M641.9 368.9L640.5 417.9M676.8 373.9L693.8 386.2M693.8 386.2L690.5 406.4M693.8 386.2L711.4 398.4M716.4 414.9L725.3 405.5M720.6 335.0L731.2 364.6" stroke="#4a2a2c" stroke-width="0.8" stroke-opacity="0.72" fill="none"/>
<path d="M793.5 270.0L669.1 306.9M793.5 270.0L679.5 321.7M793.5 270.0L704.9 311.9M793.5 270.0L720.6 335.0M793.5 270.0L731.2 364.6M793.5 270.0L729.5 395.2M793.5 270.0L760.5 414.3M793.5 270.0L742.7 406.0M599.1 270.0L669.1 306.9M599.1 270.0L641.9 368.9M599.1 270.0L640.5 417.9M599.1 270.0L667.6 325.4M599.1 465.2L641.9 368.9M599.1 465.2L640.5 417.9M599.1 465.2L690.5 406.4M599.1 465.2L716.4 414.9M599.1 465.2L725.8 415.4M599.1 465.2L760.5 414.3M599.1 465.2L711.4 398.4M793.5 465.2L760.5 414.3M793.5 465.2L725.8 415.4M793.5 465.2L716.4 414.9M793.5 465.2L793.5 270.0" stroke="#5a3034" stroke-width="0.7" stroke-opacity="0.5" fill="none"/>
<rect x="599.1" y="270" width="194.4" height="195.2" fill="none" stroke="#2e2628" stroke-width="1.4"/>
<rect x="598.4" y="474.3" width="195.9" height="196.4" fill="#fce0cb"/>
<rect x="639.8" y="520.6" width="119.5" height="115.5" fill="none" stroke="#d0dcd9" stroke-width="1.9"/>
<polygon points="647.2,524.6 691.2,534.6 711.8,541.8 717.4,525.9 726.1,525.1 735.7,529.1 755.5,527.2 731.7,544.2 730.1,575.2 722.2,584.7 720.6,605.3 705.5,626.0 703.4,598.2 711.0,572.8 692.8,552.9" fill="url(#bg1)"/>
<polygon points="642.7,571.2 672.9,576.7 677.7,566.4 684.8,566.4 691.2,569.1 702.3,567.5 684.8,578.3 685.9,598.2 680.5,605.3 678.5,619.6 669.7,632.4 668.1,613.3 671.6,599.0 664.2,587.9" fill="url(#bg1)"/>
<polygon points="647.2,524.6 691.2,534.6 711.8,541.8 719.8,560.1 692.8,552.9" fill="#beb573"/>
<polygon points="711.8,541.8 717.4,525.9 725.3,534.6 731.7,544.2" fill="#a79d5e"/>
<polygon points="725.3,534.6 735.7,529.1 755.5,527.2 731.7,544.2" fill="#9e9457"/>
<polygon points="711.8,541.8 719.8,560.1 711.0,572.8 692.8,552.9" fill="#a89e5f"/>
<polygon points="719.8,560.1 731.7,544.2 730.1,575.2 722.2,584.7 711.0,572.8" fill="#b6ad6b"/>
<polygon points="711.0,572.8 722.2,584.7 720.6,605.3 705.5,626.0 703.4,598.2" fill="#c0b776"/>
<polygon points="642.7,571.2 672.9,576.7 677.7,588.7 664.2,587.9" fill="#beb573"/>
<polygon points="677.7,566.4 684.8,566.4 684.8,578.3 672.9,576.7" fill="#a79d5e"/>
<polygon points="684.8,566.4 691.2,569.1 702.3,567.5 684.8,578.3" fill="#9e9457"/>
<polygon points="672.9,576.7 684.8,578.3 685.9,598.2 677.7,588.7" fill="#ada364"/>
<polygon points="677.7,588.7 685.9,598.2 680.5,605.3 678.5,619.6 669.7,632.4 668.1,613.3 671.6,599.0" fill="#bdb472"/>
<path d="M647.2 524.6L691.2 534.6M691.2 534.6L711.8 541.8M711.8 541.8L717.4 525.9M717.4 525.9L726.1 525.1M726.1 525.1L735.7 529.1M735.7 529.1L755.5 527.2M755.5 527.2L731.7 544.2M731.7 544.2L730.1 575.2M730.1 575.2L722.2 584.7M722.2 584.7L720.6 605.3M720.6 605.3L705.5 626.0M705.5 626.0L703.4 598.2M703.4 598.2L711.0 572.8M711.0 572.8L692.8 552.9M692.8 552.9L647.2 524.6M642.7 571.2L672.9 576.7M672.9 576.7L677.7 566.4M677.7 566.4L684.8 566.4M684.8 566.4L691.2 569.1M691.2 569.1L702.3 567.5M702.3 567.5L684.8 578.3M684.8 578.3L685.9 598.2M685.9 598.2L680.5 605.3M680.5 605.3L678.5 619.6M678.5 619.6L669.7 632.4M669.7 632.4L668.1 613.3M668.1 613.3L671.6 599.0M671.6 599.0L664.2 587.9M664.2 587.9L642.7 571.2M711.8 541.8L719.8 560.1M711.8 541.8L725.3 534.6M717.4 525.9L725.3 534.6M726.1 525.1L725.3 534.6M725.3 534.6L735.7 529.1M725.3 534.6L731.7 544.2M711.8 541.8L731.7 544.2M691.2 534.6L692.8 552.9M691.2 534.6L719.8 560.1M692.8 552.9L719.8 560.1M719.8 560.1L711.0 572.8M719.8 560.1L730.1 575.2M719.8 560.1L731.7 544.2M719.8 560.1L722.2 584.7M711.0 572.8L722.2 584.7M711.0 572.8L720.6 605.3M703.4 598.2L720.6 605.3M722.2 584.7L703.4 598.2M647.2 524.6L719.8 560.1M672.9 576.7L684.8 578.3M672.9 576.7L677.7 588.7M677.7 566.4L684.8 578.3M684.8 566.4L684.8 578.3M691.2 569.1L684.8 578.3M684.8 578.3L677.7 588.7M677.7 588.7L685.9 598.2M677.7 588.7L671.6 599.0M677.7 588.7L664.2 587.9M677.7 588.7L680.5 605.3M671.6 599.0L680.5 605.3M668.1 613.3L680.5 605.3M668.1 613.3L678.5 619.6M642.7 571.2L677.7 588.7M684.8 566.4L672.9 576.7" stroke="#3a3420" stroke-width="0.7" stroke-opacity="0.7" fill="none"/>
<path d="M793.6 475.0L647.2 524.6M793.6 475.0L691.2 534.6M793.6 475.0L717.4 525.9M793.6 475.0L726.1 525.1M793.6 475.0L755.5 527.2M793.6 475.0L735.7 529.1M793.6 475.0L730.1 575.2M599.1 475.0L647.2 524.6M599.1 475.0L642.7 571.2M599.1 670.0L642.7 571.2M599.1 670.0L669.7 632.4M599.1 670.0L668.1 613.3M599.1 670.0L664.2 587.9M793.6 670.0L705.5 626.0M793.6 670.0L669.7 632.4M793.6 670.0L720.6 605.3M793.6 670.0L730.1 575.2M793.6 670.0L755.5 527.2M639.3 520.3L647.2 524.6M639.3 636.2L642.7 571.2M639.3 520.3L642.7 571.2M639.3 636.2L669.7 632.4M759.3 636.2L705.5 626.0M759.3 636.2L730.1 575.2M759.3 520.3L755.5 527.2M759.3 520.3L730.1 575.2M599.1 475.0L639.3 520.3M793.6 475.0L759.3 520.3M599.1 670.0L639.3 636.2M793.6 670.0L759.3 636.2M599.1 475.0L639.3 636.2M793.6 475.0L639.3 520.3M793.6 670.0L759.3 520.3M599.1 670.0L759.3 636.2M647.2 524.6L642.7 571.2M647.2 524.6L664.2 587.9M647.2 524.6L672.9 576.7M647.2 524.6L677.7 566.4M692.8 552.9L677.7 566.4M692.8 552.9L702.3 567.5M692.8 552.9L684.8 566.4M711.0 572.8L702.3 567.5M703.4 598.2L702.3 567.5M703.4 598.2L685.9 598.2M703.4 598.2L684.8 578.3M705.5 626.0L680.5 605.3M705.5 626.0L678.5 619.6M705.5 626.0L669.7 632.4M703.4 598.2L680.5 605.3M691.2 534.6L755.5 527.2M730.1 575.2L705.5 626.0M702.3 567.5L691.2 534.6M647.2 524.6L692.8 552.9" stroke="#4a3828" stroke-width="0.7" stroke-opacity="0.45" fill="none"/>
<rect x="599.1" y="475" width="194.5" height="195" fill="none" stroke="#2e2a28" stroke-width="1.4"/>
<circle cx="793.5" cy="669.7" r="3.9" fill="#8a7ac2" stroke="#6a56a8" stroke-width="0.8"/><circle cx="793.5" cy="669.7" r="1.9" fill="#1a0a40"/>
</svg>

<!-- read-only bar -->
<div class="abs" style="left:611px;top:150px;width:380px;height:24.500px;background:#3c4554"></div>
<svg style="left:616px;top:156px" width="14" height="15" viewBox="0 0 14 15">
  <path d="M3.600 6.500V4.300a3.100 3.100 0 0 1 6.200 0V6.500" fill="none" stroke="#f5a623" stroke-width="1.700"/>
  <rect x="0.700" y="6" width="12" height="8.300" rx="1" fill="#f5a623"/><rect x="6" y="8.500" width="1.500" height="3" fill="#a86a08"/>
</svg>
<div class="t" style="left:637px;top:156.800px;font-size:11.500px;font-weight:bold;color:#fff">Read-Only:</div>
<div class="t" style="left:720.500px;top:156.800px;font-size:11.500px;color:#e8eaee">Document is not editable</div>
<div class="abs" style="left:881.500px;top:151px;width:1px;height:22.500px;background:#4c5566"></div>
<div class="t" style="left:895.500px;top:156.800px;font-size:11.500px;color:#1c6fb3">Make Editable</div>
<!-- viewcube -->
<div class="abs" style="left:1525px;top:177px;width:44px;height:43.500px;background:#ededee;border:1px solid #a9abae;border-right-color:#c9cbce;border-bottom-color:#c4c6c9;box-shadow:0 1px 6px rgba(0,0,0,0.18)"></div>
<div class="abs" style="left:1533.500px;top:185.500px;width:27px;height:27px;background:#e4e6e8"></div>
<div class="t" style="left:1538.800px;top:193.300px;font-size:11.300px;color:#8f949b;letter-spacing:0.3px;transform:scaleX(0.78);transform-origin:0 0">TOP</div>
<div class="t" style="left:1526.300px;top:164.800px;font-size:12px;color:#86e286;transform:scaleX(0.72);transform-origin:0 0">Y</div>
<div class="t" style="left:1573px;top:211.800px;font-size:11px;color:#f08a8a;transform:scaleX(0.8);transform-origin:0 0">X</div>
<div class="t" style="left:1520px;top:217px;font-size:11.500px;color:#7272f0;font-weight:bold;font-style:italic">Z</div>
<div class="abs" style="left:1569px;top:216.500px;width:3px;height:1.500px;background:#f08a8a"></div>

<!-- ===== BROWSER ===== -->
<svg width="0" height="0" style="left:0;top:0"><defs><symbol id="eye" viewBox="0 0 18 12" overflow="visible"><path d="M0.500 6C3 1.800 6 0.600 9 0.600S15 1.800 17.500 6C15 10.200 12 11.400 9 11.400S3 10.200 0.500 6z" fill="#dcdde0"/><circle cx="9" cy="6" r="3.300" fill="#c2c5ca" stroke="#59606d" stroke-width="1.400"/></symbol><symbol id="eyeh" viewBox="0 0 18 12" overflow="visible"><path d="M0.800 6C3 2.200 6 1.200 9 1.200S15 2.200 17.200 6C15 9.800 12 10.800 9 10.800S3 9.800 0.800 6z" fill="none" stroke="#c3c6cb" stroke-width="1.100"/><circle cx="9" cy="6" r="2.800" fill="none" stroke="#c3c6cb" stroke-width="1.100"/><path d="M3.500 0.300L14.500 11.700" stroke="#c3c6cb" stroke-width="1.200"/></symbol><symbol id="chd" viewBox="0 0 11 8" overflow="visible"><path d="M1.500 1.700L5.500 5.900 9.500 1.700" fill="none" stroke="#4b4f57" stroke-width="3.700" stroke-linecap="round" stroke-linejoin="round"/><path d="M1.500 1.700L5.500 5.900 9.500 1.700" fill="none" stroke="#fafafa" stroke-width="1.600" stroke-linecap="round" stroke-linejoin="round"/></symbol><symbol id="chr" viewBox="0 0 8 11" overflow="visible"><path d="M1.700 1.500L5.900 5.500 1.700 9.500" fill="none" stroke="#4b4f57" stroke-width="3.700" stroke-linecap="round" stroke-linejoin="round"/><path d="M1.700 1.500L5.900 5.500 1.700 9.500" fill="none" stroke="#fafafa" stroke-width="1.600" stroke-linecap="round" stroke-linejoin="round"/></symbol><symbol id="fold" viewBox="0 0 16 14" overflow="visible"><path d="M0 1.200h5.500l1.500 2H16v10.800H0z" fill="#d9d9d9"/><path d="M0 1.200h5.500l1.500 2" fill="none" stroke="#f2f2f2" stroke-width="0.8"/></symbol><symbol id="skl" viewBox="0 0 18 18" overflow="visible"><path d="M2 3.500v11M3.500 2h11M16 3.500v3M3.500 16h4" stroke="#cfd2d6" stroke-width="1" stroke-dasharray="3.500 1.500" fill="none"/><g fill="#e0e2e5"><rect x="0.800" y="0.800" width="2.400" height="2.400"/><rect x="14.800" y="0.800" width="2.400" height="2.400"/><rect x="0.800" y="14.800" width="2.400" height="2.400"/></g><path d="M11.200 11V9.300a2.300 2.300 0 0 1 4.600 0V11" fill="none" stroke="#e6706b" stroke-width="1.300"/><rect x="9.800" y="10.800" width="7.400" height="6.400" rx="0.800" fill="#e6706b"/><rect x="13" y="12.800" width="1" height="2.200" fill="#fbd0cc"/></symbol></defs></svg>
<svg style="left:0;top:0" width="220" height="640" viewBox="0 0 220 640"><rect x="4" y="150.3" width="120" height="25.3" fill="#3c4554"/><rect x="42" y="181.3" width="30" height="20.4" fill="#3c4554"/><rect x="66.4" y="180.6" width="60" height="21.8" fill="#79c3f4"/><rect x="66.4" y="181.4" width="60" height="20.2" fill="#3a78ad"/><rect x="67.4" y="181.5" width="59" height="20.0" fill="#2f4e6d"/><rect x="93" y="181.5" width="1" height="20.0" fill="#46708f"/><rect x="60.5" y="206.3" width="100" height="20.4" fill="#3c4554"/><rect x="87" y="206.3" width="1" height="20.4" fill="#4e5767"/><rect x="60.5" y="231.3" width="100" height="20.4" fill="#3c4554"/><rect x="87" y="231.3" width="1" height="20.4" fill="#4e5767"/><rect x="60.5" y="256.3" width="160" height="20.4" fill="#3c4554"/><rect x="87" y="256.3" width="1" height="20.4" fill="#4e5767"/><rect x="60.5" y="281.3" width="160" height="20.4" fill="#3c4554"/><rect x="87" y="281.3" width="1" height="20.4" fill="#4e5767"/><rect x="79" y="306.3" width="160" height="20.4" fill="#3c4554"/><rect x="105" y="306.3" width="1" height="20.4" fill="#4e5767"/><rect x="79" y="331.3" width="160" height="20.4" fill="#3c4554"/><rect x="105" y="331.3" width="1" height="20.4" fill="#4e5767"/><rect x="79" y="356.3" width="160" height="20.4" fill="#3c4554"/><rect x="105" y="356.3" width="1" height="20.4" fill="#4e5767"/><rect x="79" y="381.3" width="160" height="20.4" fill="#3c4554"/><rect x="105" y="381.3" width="1" height="20.4" fill="#4e5767"/><rect x="79" y="406.3" width="160" height="20.4" fill="#3c4554"/><rect x="105" y="406.3" width="1" height="20.4" fill="#4e5767"/><rect x="79" y="431.3" width="160" height="20.4" fill="#3c4554"/><rect x="105" y="431.3" width="1" height="20.4" fill="#4e5767"/><rect x="60.5" y="481.3" width="160" height="20.4" fill="#3c4554"/><rect x="87" y="481.3" width="1" height="20.4" fill="#4e5767"/><rect x="79" y="506.3" width="160" height="20.4" fill="#3c4554"/><rect x="105" y="506.3" width="1" height="20.4" fill="#4e5767"/><rect x="79" y="531.3" width="160" height="20.4" fill="#3c4554"/><rect x="105" y="531.3" width="1" height="20.4" fill="#4e5767"/><rect x="79" y="556.3" width="160" height="20.4" fill="#3c4554"/><rect x="105" y="556.3" width="1" height="20.4" fill="#4e5767"/><rect x="79" y="581.3" width="119.5" height="20.4" fill="#3c4554"/><rect x="105" y="581.3" width="1" height="20.4" fill="#4e5767"/><rect x="131" y="581.3" width="1" height="20.4" fill="#4e5767"/><rect x="79" y="606.3" width="115.5" height="20.4" fill="#3c4554"/><rect x="105" y="606.3" width="1" height="20.4" fill="#4e5767"/><rect x="131" y="606.3" width="1" height="20.4" fill="#4e5767"/></svg>
<svg style="left:11px;top:160px" width="9" height="6" viewBox="0 0 9 6"><path d="M4 0L0.500 3 4 6zM8.500 0L5 3 8.500 6z" fill="#878d98"/></svg>
<div class="t" style="left:34px;top:158.300px;font-size:11.500px;color:#dfe2e6;letter-spacing:0.8px;font-family:'DejaVu Sans Condensed','Liberation Sans',sans-serif">BROWSER</div>
<svg style="left:45px;top:185.900px" width="17" height="11.300"><use href="#eye"/></svg>
<svg style="left:21.9px;top:188.0px" width="11" height="8"><use href="#chd"/></svg>
<svg style="left:70.800px;top:182.900px" width="16.800" height="17" viewBox="0 0 17 17"><path d="M1 5l4-4h11l-4 4z" fill="#c4e3fb"/><rect x="1" y="5" width="11" height="11" fill="#8fcbf8"/><path d="M12 5l4-4v11l-4 4z" fill="#62ace6"/></svg>
<svg style="left:42.1px;top:211.1px" width="8" height="11"><use href="#chr"/></svg>
<svg style="left:63.300px;top:208.400px" width="16.600" height="16.600" viewBox="-8.500 -8.500 17 17"><g fill="#a3a7af"><circle r="5.800"/><rect x="-1.900" y="-8.300" width="3.800" height="4" rx="0.500" transform="rotate(0)"/><rect x="-1.900" y="-8.300" width="3.800" height="4" rx="0.500" transform="rotate(45)"/><rect x="-1.900" y="-8.300" width="3.800" height="4" rx="0.500" transform="rotate(90)"/><rect x="-1.900" y="-8.300" width="3.800" height="4" rx="0.500" transform="rotate(135)"/><rect x="-1.900" y="-8.300" width="3.800" height="4" rx="0.500" transform="rotate(180)"/><rect x="-1.900" y="-8.300" width="3.800" height="4" rx="0.500" transform="rotate(225)"/><rect x="-1.900" y="-8.300" width="3.800" height="4" rx="0.500" transform="rotate(270)"/><rect x="-1.900" y="-8.300" width="3.800" height="4" rx="0.500" transform="rotate(315)"/></g><circle r="2.900" fill="#3c4554"/></svg>
<div class="t" style="left:95.300px;top:210.500px;font-size:12px;color:#f2f3f5">D</div>
<svg style="left:42.1px;top:236.1px" width="8" height="11"><use href="#chr"/></svg>
<svg style="left:63.500px;top:234.300px" width="16" height="14"><use href="#fold"/></svg>
<div class="t" style="left:95.300px;top:235.500px;font-size:12px;color:#f2f3f5">N</div>
<svg style="left:63.5px;top:260.9px" width="17" height="11.300"><use href="#eyeh"/></svg>
<svg style="left:42.0px;top:261.0px" width="8" height="11"><use href="#chr"/></svg>
<svg style="left:90.0px;top:259.3px" width="16" height="14"><use href="#fold"/></svg>
<svg style="left:63.5px;top:285.9px" width="17" height="11.300"><use href="#eye"/></svg>
<svg style="left:41.0px;top:287.5px" width="11" height="8"><use href="#chd"/></svg>
<svg style="left:90.0px;top:284.3px" width="16" height="14"><use href="#fold"/></svg>
<svg style="left:82px;top:310.9px" width="17" height="11.300"><use href="#eye"/></svg>
<svg style="left:82px;top:335.9px" width="17" height="11.300"><use href="#eye"/></svg>
<svg style="left:82px;top:360.9px" width="17" height="11.300"><use href="#eyeh"/></svg>
<svg style="left:82px;top:385.9px" width="17" height="11.300"><use href="#eyeh"/></svg>
<svg style="left:82px;top:410.9px" width="17" height="11.300"><use href="#eyeh"/></svg>
<svg style="left:82px;top:435.9px" width="17" height="11.300"><use href="#eyeh"/></svg>
<svg style="left:63.5px;top:485.9px" width="17" height="11.300"><use href="#eye"/></svg>
<svg style="left:41.0px;top:487.5px" width="11" height="8"><use href="#chd"/></svg>
<svg style="left:90.0px;top:484.3px" width="16" height="14"><use href="#fold"/></svg>
<svg style="left:82px;top:510.9px" width="17" height="11.300"><use href="#eye"/></svg>
<svg style="left:82px;top:535.9px" width="17" height="11.300"><use href="#eyeh"/></svg>
<svg style="left:82px;top:560.9px" width="17" height="11.300"><use href="#eyeh"/></svg>
<svg style="left:82px;top:585.9px" width="17" height="11.300"><use href="#eyeh"/></svg>
<svg style="left:107.5px;top:582.8px" width="17.500" height="17.500"><use href="#skl"/></svg>
<div class="t" style="left:139.5px;top:585.5px;font-size:11.600px;color:#f2f3f5">Sketch6</div>
<svg style="left:82px;top:610.9px" width="17" height="11.300"><use href="#eyeh"/></svg>
<svg style="left:107.5px;top:607.8px" width="17.500" height="17.500"><use href="#skl"/></svg>
<div class="t" style="left:139.5px;top:610.5px;font-size:11.600px;color:#f2f3f5">Sketch7</div>

<!-- ===== TOOLTIP ===== -->
<div class="abs" style="left:103.500px;top:146.500px;width:350px;height:445.500px;background:#dfe9f7;border-radius:11px"></div>
<div class="t tt" style="left:120.300px;top:153.8px;letter-spacing:-0.062px">Create Sketch</div>
<div class="t tt" style="left:120.300px;top:178.6px;letter-spacing:0.116px">Enters Sketch mode, where you create geometric</div>
<div class="t tt" style="left:120.300px;top:195.3px;letter-spacing:0.212px">profiles that define the foundation of a design. Then</div>
<div class="t tt" style="left:120.300px;top:212.0px;letter-spacing:0.094px">use commands like Extrude, Revolve, and Loft to</div>
<div class="t tt" style="left:120.300px;top:228.6px;letter-spacing:0.054px">create 3D bodies from sketches.</div>
<div class="t tt" style="left:120.300px;top:262.2px;letter-spacing:0.052px">Select a construction plane, then create lines, arcs, or</div>
<div class="t tt" style="left:120.300px;top:278.9px;letter-spacing:0.150px">points to create sketch and construction geometry.</div>
<div class="t tt" style="left:120.300px;top:295.6px;letter-spacing:0.024px">Constrain sketches with dimensions and constraints.</div>
<div class="t tt" style="left:120.300px;top:312.3px;letter-spacing:0.044px">Select Finish Sketch to exit Sketch mode.</div>
<div class="t tt" style="left:120.300px;top:574.3px;letter-spacing:0.216px">Press Ctrl+/ for more help.</div>
<svg style="left:116px;top:351px" width="316.500" height="195.500" viewBox="116 351 316.500 195.500">
<defs><clipPath id="imc"><rect x="116" y="351" width="316.500" height="195.500"/></clipPath><linearGradient id="arcg" x1="0" y1="0" x2="1" y2="1"><stop offset="0" stop-color="#c8c8c8"/><stop offset="0.5" stop-color="#6e6e6e"/><stop offset="1" stop-color="#d8d8d8"/></linearGradient></defs>
<g clip-path="url(#imc)"><rect x="116" y="351" width="316.500" height="195.500" fill="#fefefe"/>
<path d="M160.7 351V547M189 351V547M216.7 351V547M244.7 351V547M274.5 351V547M331.3 351V547M359.7 351V547M388 351V547M416.5 351V547M116 377H433M116 405.5H433M116 434H433M116 490.8H433M116 519.2H433" stroke="#ebebeb" stroke-width="1" fill="none"/>
<path d="M302.400 351V547" stroke="#93e093" stroke-width="1"/><path d="M132.500 462V547" stroke="#a8e8a8" stroke-width="1"/>
<path d="M116 462.800H433" stroke="#f3a3a3" stroke-width="1"/>
<path d="M246 405.500H359.500V473.500A46 46 0 0 1 313.500 519.700H246z" fill="#e4f0fa"/>
<path d="M246 405.500L359.500 519.700M359.500 405.500L246 519.700" stroke="#5a5a5a" stroke-width="1" stroke-dasharray="6 3" fill="none"/>
<path d="M359.500 473.500V405.500H246V519.700H313.500" stroke="#333" stroke-width="1.800" fill="none"/>
<path d="M359.500 473.500A46 46 0 0 1 313.500 519.700" stroke="#4aa8e0" stroke-width="1.600" fill="none"/>
<circle cx="302.400" cy="462.800" r="5.500" fill="none" stroke="#666" stroke-width="0.900" stroke-dasharray="2 1.500"/><circle cx="302.400" cy="462.800" r="3" fill="#111"/>
<path d="M246 391V404M359.500 391V404M248 396.200H357.500" stroke="#444" stroke-width="0.900" fill="none"/><path d="M246.300 396.200l7-2v4zM359.200 396.200l-7-2v4z" fill="#333"/>
<path d="M364 405.500H413M364 473.500H413M408.600 408V471" stroke="#555" stroke-width="0.900" fill="none"/><path d="M408.600 405.800l-2 7h4zM408.600 473.200l-2-7h4z" fill="#444"/>
<path d="M356.500 495L389.400 513.800H428" stroke="#444" stroke-width="0.900" fill="none"/><path d="M356.500 495l7 1.600-2 3.400z" fill="#333"/>
<text x="283.700" y="392" font-size="11.500" fill="#555" font-family="Liberation Sans,sans-serif">100.00</text>
<text x="390.500" y="508.800" font-size="11.500" fill="#666" font-family="Liberation Sans,sans-serif">R40.00</text>
<text transform="translate(393 417) rotate(90)" font-size="11.500" fill="#8a8a8a" font-family="Liberation Sans,sans-serif">(60.00)</text>
<g fill="#b5b5b5" stroke="#909090" stroke-width="0.500"><rect x="261.500" y="403" width="13.500" height="5.500" rx="1"/><rect x="294.500" y="409.500" width="14.500" height="6" rx="1"/><rect x="238.500" y="479" width="13.500" height="5.500" rx="1"/><rect x="193.500" y="455" width="6" height="16" rx="1"/></g>
<g stroke="#a8a8a8" stroke-width="2" fill="none"><path d="M310 421l8-8M313.500 423l8-8M354 445l8-8M356.500 448l8-8M239.500 475.500l8-8M242 478l8-8M285 531l8-8M288 534l8-8M352 414l6-6"/></g>
<path d="M291.500 466v8l8-1.500M291.500 474l-5 4" stroke="#888" stroke-width="1.500" fill="none"/><circle cx="291.500" cy="465" r="1.500" fill="#fff" stroke="#777" stroke-width="0.800"/>
<circle cx="314" cy="474" r="2.300" fill="#fff" stroke="#777" stroke-width="0.800"/>
<path d="M344.500 523v12h9" stroke="#777" stroke-width="2.200" fill="none"/><circle cx="344.500" cy="522" r="1.500" fill="#fff" stroke="#666" stroke-width="0.800"/>
<path d="M137 381.500A82 82 0 0 1 213 455" stroke="url(#arcg)" stroke-width="1.600" fill="none"/>
<path d="M132.500 377V405.500" stroke="#35d335" stroke-width="2" stroke-dasharray="5 2.500"/><path d="M132.500 405.500V462" stroke="#35c935" stroke-width="2.200"/>
<path d="M135 405.500H182" stroke="#eab184" stroke-width="1.200" stroke-dasharray="6 3"/><path d="M189 414V516" stroke="#e6a87a" stroke-width="1.200" stroke-dasharray="14 3 2 3"/>
<rect x="145.300" y="419" width="31" height="31" fill="#5b9de8" fill-opacity="0.920"/>
<path d="M176.300 419L184 411.500" stroke="#888" stroke-width="1.300"/>
<path d="M132.500 405.500C148 410 160.500 422 160.500 434S148 455 132.500 462.800" stroke="#55606a" stroke-width="1" fill="none"/><path d="M132.500 405.500C144 412 156 424 160.500 434S146 452 132.500 462.800" stroke="#b8c8a0" stroke-width="0.800" fill="none"/>
<circle cx="132.500" cy="405.500" r="3" fill="#1f6b1f"/><circle cx="160.500" cy="434" r="2.600" fill="#2c4a78"/>
<circle cx="188" cy="406.800" r="7" fill="#e9e9e9" stroke="#555" stroke-width="1.800"/><circle cx="188" cy="406.800" r="2" fill="#aaa" stroke="#777" stroke-width="0.600"/>
<path d="M136 462.800H219" stroke="#ee2a2a" stroke-width="2.400" stroke-dasharray="26 3 4 3"/>
<path d="M132.500 462.800C119 480 120 505 131 519" stroke="#999" stroke-width="1" fill="none"/>
<circle cx="132.500" cy="462.800" r="4.500" fill="#d6d6d6" stroke="#777" stroke-width="1"/>
<text transform="translate(150 466.500) rotate(90)" font-size="9.500" fill="#8a8a8a" font-family="Liberation Sans,sans-serif">-125</text>
<rect x="126" y="513.500" width="12" height="12" fill="#e8f4fc" fill-opacity="0.700" stroke="#7cc4ea" stroke-width="1"/><path d="M124 519.700H141M132.500 512V527" stroke="#888" stroke-width="0.900"/>
<path d="M137 496.500h8M137 499h8M137 501.500h8M138 507.500l2-4.500M141 507.500l2-4.500M144 507.500l2-4.500" stroke="#7cc4ea" stroke-width="0.900"/>
<path d="M134.500 524.500v11l2.600-2.200 2 4.200 1.800-.8-2-4.200h3.400z" fill="#fff" stroke="#444" stroke-width="0.800"/>
<path d="M141.500 545c0-4 3-5 5-3.500s4 .5 4.500-3" stroke="#2a52c8" stroke-width="1.400" fill="none"/><circle cx="141.500" cy="545" r="1.200" fill="#2a52c8"/><circle cx="151" cy="538.500" r="1.200" fill="#2a52c8"/>
<circle cx="188.600" cy="519.700" r="3" fill="#fff" stroke="#999" stroke-width="1"/>
<circle cx="200.400" cy="531.600" r="7.300" fill="#fdfdfd" stroke="#aaa" stroke-width="1.200"/><path d="M196.500 531.500l3 3 4.500-6" stroke="#888" stroke-width="1.400" fill="none"/>
</g></svg>
<svg style="left:0;top:0" width="1600" height="850" viewBox="0 0 1600 850"><path d="M361 161L578.700 186.400" stroke="#f5270b" stroke-width="4.200" fill="none"/><path d="M335.400 158.400L362.900 148.400 359.900 173.600z" fill="#f5270b"/></svg>

<!-- ===== BOTTOM ===== -->
<div class="abs" style="left:4px;top:767.500px;width:312.500px;height:25.500px;background:#3c4554"></div>
<div class="t" style="left:33.500px;top:776.400px;font-size:11.500px;color:#dfe2e6;letter-spacing:0.95px;font-family:'DejaVu Sans Condensed','Liberation Sans',sans-serif">COMMENTS</div>
<svg style="left:294.500px;top:775.500px" width="10" height="10" viewBox="0 0 10 10"><path d="M0.500 5h9M5 0.500v9" stroke="#b3b7bf" stroke-width="1.800"/></svg>
<div class="abs" style="left:676px;top:767px;width:249px;height:24.700px;background:#3c4554"></div>
<svg style="left:676px;top:767px" width="249" height="25" viewBox="676 767 249 25">
<g fill="#8e949f"><path d="M702.500 777.500h6l-3 4z"/><path d="M819 777.500h6l-3 4z"/><path d="M850.500 777.500h6l-3 4z"/><path d="M883 777.500h6l-3 4z"/><path d="M915.500 777.500h6l-3 4z"/></g>
<ellipse cx="687.500" cy="779.500" rx="7.800" ry="3.600" fill="none" stroke="#f0f0f0" stroke-width="1.400"/><path d="M687.500 771.500v16" stroke="#58a8e8" stroke-width="1.400"/><path d="M684 785l4.500-2-1 4z" fill="#f0f0f0"/>
<path d="M716.500 776.500l4-4.200 8.500 2.200v2z" fill="#c9ccd1"/><rect x="716.500" y="776.500" width="14.500" height="10" fill="none" stroke="#f0f0f0" stroke-width="1.500"/><rect x="719.500" y="779" width="8.500" height="5" fill="#76bdf2"/>
<path d="M747 788.500l-1.500-3.500-3.200-3.800M747.500 783l-2.300-8.300M750 782l-.3-9.200M752.600 782.500l1.700-8.800M755 784l3.200-6.800" stroke="#e9e9e9" stroke-width="2.300" stroke-linecap="round" fill="none"/><path d="M745.500 781.500h10.300l-1.200 7h-7.300z" fill="#e9e9e9"/>
<circle cx="774" cy="779.500" r="4.600" fill="#565c68" stroke="#f0f0f0" stroke-width="1.400"/><path d="M777.500 783l5 4.500" stroke="#d8b890" stroke-width="1.800"/><path d="M782 772.500h4.500M784.200 770.300v4.400M782 776.800h4.500" stroke="#f0f0f0" stroke-width="1"/>
<rect x="796.500" y="771.700" width="16.500" height="16" fill="none" stroke="#e4e4e4" stroke-width="1" stroke-dasharray="2.200 1.600"/><circle cx="803.800" cy="778.500" r="6.500" fill="#565c68" stroke="#f0f0f0" stroke-width="1.400"/><path d="M809 785l3 2.500" stroke="#d8b890" stroke-width="1.400"/>
<rect x="832.500" y="773.700" width="14.500" height="10" fill="#c6c8cc" stroke="#f0f0f0" stroke-width="1.400"/><path d="M839.700 784v2.500M835.500 787h8.500" stroke="#f0f0f0" stroke-width="1.400"/>
<path d="M863.500 771.500h13.800v13.200h-13.800zM868.100 771.500v13.200M872.700 771.500v13.200M863.500 775.900h13.800M863.500 780.300h13.800" stroke="#e4e4e4" stroke-width="1.200" fill="none"/>
<g fill="#c6c8cc" stroke="#e4e4e4" stroke-width="1"><rect x="896.500" y="772.700" width="6.800" height="5.800"/><rect x="904.700" y="772.700" width="6.800" height="5.800"/><rect x="896.500" y="780" width="6.800" height="5.800"/><rect x="904.700" y="780" width="6.800" height="5.800"/></g>
<g fill="#9a9da3"><rect x="898.300" y="774.600" width="3.200" height="2"/><rect x="906.500" y="774.600" width="3.200" height="2"/><rect x="898.300" y="781.900" width="3.200" height="2"/><rect x="906.500" y="781.900" width="3.200" height="2"/></g>
</svg>
<div id="timeline"></div>
<svg width="0" height="0" style="left:0;top:0"><defs>
<symbol id="tgold" viewBox="-9 -9 18 18" overflow="visible"><path d="M-7.800-2.500c0-3 2-4.700 5-4.700h5.600c3 0 5 1.700 5 4.700v5c0 3.500-2.500 6-5.500 6h-4.600c-3 0-5.500-2.500-5.500-6z" fill="#e6cc6c"/><path d="M-6.500-2.500c0-2.200 1.500-3.500 3.800-3.500h5.400c1.500 0 2.500.5 3 1.500l-2.500 4-9 1.500z" fill="#f2e296"/><path d="M-6.800 1l9-1.500 2.500-4M-3 7.500l5-8M-7 4l10 2.500M2.200-.5l3.500 7" stroke="#c9a94c" stroke-width="0.600" fill="none"/><path d="M1-5.500l6.500-1.500 0.500 6-3.500 1z" fill="#c7a850" fill-opacity="0.850"/><path d="M4.500-10l1.300 3.400 3.400 1.300-3.400 1.300-1.300 3.400-1.300-3.400-3.400-1.300 3.400-1.300z" fill="#fde79c"/></symbol>
<symbol id="tmove" viewBox="-9 -9 18 18" overflow="visible"><path d="M0-5v2.600M0 5v-2.600M-5 0h2.600M5 0h-2.600" stroke="#d9dce0" stroke-width="1.500"/><path d="M0-7.800l2.900 3.400h-5.800zM0 7.800l2.900-3.400h-5.800zM-7.800 0l3.400-2.900v5.800zM7.800 0l-3.400-2.900v5.800z" fill="#dfe2e5"/><rect x="-1.700" y="-1.500" width="3.400" height="3" fill="none" stroke="#cfd2d6" stroke-width="0.800"/></symbol>
<symbol id="tblue" viewBox="-9 -9 18 18" overflow="visible"><rect x="-7.500" y="-8" width="15.500" height="15.500" fill="#84c6f7"/><rect x="-7.500" y="-1" width="8.500" height="8.500" fill="#dcdcdc"/></symbol>
<symbol id="tdot" viewBox="-9 -9 18 18" overflow="visible"><circle cx="3.200" cy="0" r="4" fill="#a6c6ec" stroke="#2e3e55" stroke-width="0.800"/><path d="M-0.800 0h-3" stroke="#050505" stroke-width="2.200"/><path d="M-7.800 0l4.300-3.700v7.400z" fill="#050505"/></symbol>
<symbol id="tsk" viewBox="-9 -9 18 18" overflow="visible"><path d="M-6.800-5.500v9.500M-5.500-6.800h10.500M6.800-5.500v3.500M-5.500 5.700h4.500" stroke="#b6babf" stroke-width="1.400" fill="none"/><g fill="#6fb4ec"><rect x="-8.200" y="-8.200" width="2.800" height="2.800"/><rect x="5.400" y="-8.200" width="2.800" height="2.800"/><rect x="-8.200" y="4.300" width="2.800" height="2.800"/></g><path d="M0.800 7.900l1-3.200 5.300-5.300 2.300 2.300-5.300 5.300z" fill="#f6d262"/><path d="M7.100-0.600l1.300-1.300 2.300 2.300-1.300 1.300z" fill="#e8605a"/><path d="M0.800 7.900l1-3.200 2.300 2.300z" fill="#f4f4f4"/></symbol>
<symbol id="tdb" viewBox="-9 -9 18 18" overflow="visible"><rect x="-5.700" y="-7.800" width="5" height="6.300" rx="1.600" fill="#f0f0f0"/><rect x="0.800" y="-0.500" width="5.400" height="7" rx="1.700" fill="#f0f0f0"/><path d="M-4 -5.800v2.500M2.700 1.800v2.800" stroke="#b0b0b0" stroke-width="1.200"/><path d="M-4.800 0v3h3" stroke="#4a7fd0" stroke-width="1" fill="none"/></symbol>
</defs></svg>
<svg style="left:0;top:798px" width="1600" height="52" viewBox="0 798 1600 52">
<g fill="#a9aeb6"><path d="M10.500 817.500h2.500v13h-2.500zM23.300 817.500v13l-9.800-6.500z"/><path d="M37 824l10-6.500v13zM48.500 820h2.500v8h-2.500z"/><path d="M63.300 816l13 8-13 8z"/><path d="M102 824l-10-6.500v13zM88 820h2.500v8h-2.500z"/><path d="M127.500 817.500h-2.500v13h2.500zM114.700 817.500v13l9.800-6.500z"/></g>
<path d="M159.500 840.500H1286.700M160.6 835V840.500M185.6 835V840.500M210.6 835V840.500M235.6 835V840.500M260.6 835V840.500M285.6 835V840.500M310.6 835V840.500M335.6 835V840.500M360.6 835V840.500M385.6 835V840.500M410.6 835V840.500M435.6 835V840.500M460.6 835V840.500M485.6 835V840.500M510.6 835V840.500M535.6 835V840.500M560.6 835V840.500M585.6 835V840.500M610.6 835V840.500M635.6 835V840.500M660.6 835V840.500M685.6 835V840.500M710.6 835V840.500M735.6 835V840.500M760.6 835V840.500M785.6 835V840.500M810.6 835V840.500M835.6 835V840.500M860.6 835V840.500M885.6 835V840.500M910.6 835V840.500M935.6 835V840.500M960.6 835V840.500M985.6 835V840.500M1010.6 835V840.500M1035.6 835V840.500M1060.6 835V840.500M1085.6 835V840.500M1110.6 835V840.500M1135.6 835V840.500M1160.6 835V840.500M1185.6 835V840.500M1210.6 835V840.500M1235.6 835V840.500M1260.6 835V840.500M1285.6 835V840.500" stroke="#606b7c" stroke-width="2" fill="none"/>
<use href="#tgold" x="151.0" y="814.7" width="18" height="18"/>
<use href="#tgold" x="176.0" y="814.7" width="18" height="18"/>
<use href="#tdot" x="201.7" y="814.7" width="18" height="18"/>
<use href="#tgold" x="226.0" y="814.7" width="18" height="18"/>
<use href="#tblue" x="251.7" y="814.7" width="18" height="18"/>
<use href="#tmove" x="276.7" y="814.7" width="18" height="18"/>
<use href="#tmove" x="301.7" y="814.7" width="18" height="18"/>
<use href="#tmove" x="326.7" y="814.7" width="18" height="18"/>
<use href="#tmove" x="351.7" y="814.7" width="18" height="18"/>
<use href="#tsk" x="376.7" y="814.7" width="18" height="18"/>
<use href="#tgold" x="401.0" y="814.7" width="18" height="18"/>
<use href="#tgold" x="426.0" y="814.7" width="18" height="18"/>
<use href="#tblue" x="451.7" y="814.7" width="18" height="18"/>
<use href="#tmove" x="476.7" y="814.7" width="18" height="18"/>
<use href="#tmove" x="501.7" y="814.7" width="18" height="18"/>
<use href="#tmove" x="526.7" y="814.7" width="18" height="18"/>
<use href="#tmove" x="551.7" y="814.7" width="18" height="18"/>
<use href="#tmove" x="576.7" y="814.7" width="18" height="18"/>
<use href="#tmove" x="601.7" y="814.7" width="18" height="18"/>
<use href="#tmove" x="626.7" y="814.7" width="18" height="18"/>
<use href="#tmove" x="651.7" y="814.7" width="18" height="18"/>
<use href="#tsk" x="676.7" y="814.7" width="18" height="18"/>
<use href="#tgold" x="701.0" y="814.7" width="18" height="18"/>
<use href="#tgold" x="726.0" y="814.7" width="18" height="18"/>
<use href="#tblue" x="751.7" y="814.7" width="18" height="18"/>
<use href="#tmove" x="776.7" y="814.7" width="18" height="18"/>
<use href="#tmove" x="801.7" y="814.7" width="18" height="18"/>
<use href="#tmove" x="826.7" y="814.7" width="18" height="18"/>
<use href="#tmove" x="851.7" y="814.7" width="18" height="18"/>
<use href="#tmove" x="876.7" y="814.7" width="18" height="18"/>
<use href="#tblue" x="901.7" y="814.7" width="18" height="18"/>
<use href="#tmove" x="926.7" y="814.7" width="18" height="18"/>
<use href="#tsk" x="951.7" y="814.7" width="18" height="18"/>
<use href="#tdot" x="976.7" y="814.7" width="18" height="18"/>
<use href="#tdot" x="1001.7" y="814.7" width="18" height="18"/>
<use href="#tgold" x="1026.0" y="814.7" width="18" height="18"/>
<use href="#tgold" x="1051.0" y="814.7" width="18" height="18"/>
<use href="#tblue" x="1076.7" y="814.7" width="18" height="18"/>
<use href="#tblue" x="1101.7" y="814.7" width="18" height="18"/>
<use href="#tmove" x="1126.7" y="814.7" width="18" height="18"/>
<use href="#tmove" x="1151.7" y="814.7" width="18" height="18"/>
<use href="#tmove" x="1176.7" y="814.7" width="18" height="18"/>
<use href="#tdb" x="1201.7" y="814.7" width="18" height="18"/>
<use href="#tmove" x="1226.7" y="814.7" width="18" height="18"/>
<use href="#tsk" x="1251.7" y="814.7" width="18" height="18"/>
<use href="#tsk" x="1276.7" y="814.7" width="18" height="18"/>
<path d="M1292 808h12.200v3.500l-4.900 6v24h-2.600v-24l-4.700-6z" fill="#d8dbe0"/>
<g transform="translate(1577.500 824)"><g fill="#a9aeb6"><circle r="6.200"/><rect x="-1.900" y="-8.600" width="3.800" height="4" transform="rotate(0)"/><rect x="-1.900" y="-8.600" width="3.800" height="4" transform="rotate(45)"/><rect x="-1.900" y="-8.600" width="3.800" height="4" transform="rotate(90)"/><rect x="-1.900" y="-8.600" width="3.800" height="4" transform="rotate(135)"/><rect x="-1.900" y="-8.600" width="3.800" height="4" transform="rotate(180)"/><rect x="-1.900" y="-8.600" width="3.800" height="4" transform="rotate(225)"/><rect x="-1.900" y="-8.600" width="3.800" height="4" transform="rotate(270)"/><rect x="-1.900" y="-8.600" width="3.800" height="4" transform="rotate(315)"/></g><circle r="2.800" fill="#3c4554"/></g>
</svg>

</div>
</body></html>
